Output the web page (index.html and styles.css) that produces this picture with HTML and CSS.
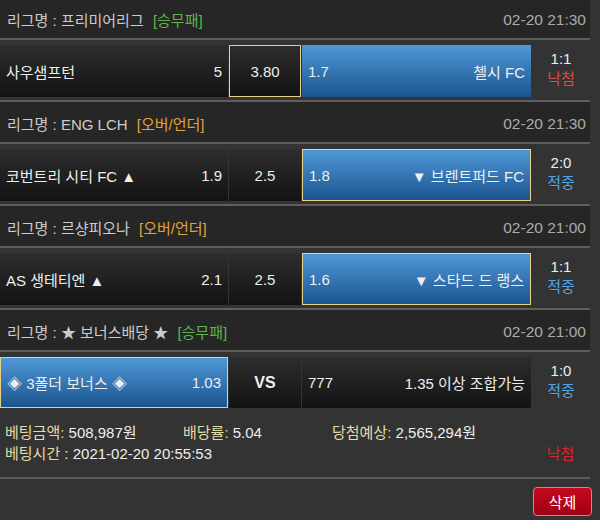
FILE: index.html
```html
<!DOCTYPE html>
<html lang="ko">
<head>
    <meta charset="UTF-8">
    <meta name="viewport" content="width=device-width, initial-scale=1.0">
    <title>베팅내역</title>
    <link rel="stylesheet" href="styles.css">
</head>
<body>
    <div class="betSlip">
        <div class="league">
            <span>리그명 : 프리미어리그 <em class="win">[승무패]</em></span>
            <span class="date">02-20 21:30</span>
        </div>
        <div class="game">
            <div class="cell"><span>사우샘프턴</span><span>5</span></div>
            <div class="cell draw selected">3.80</div>
            <div class="cell picked"><span>1.7</span><span>첼시 FC</span></div>
            <div class="result"><span>1:1</span><span class="miss">낙첨</span></div>
        </div>

        <div class="league">
            <span>리그명 : ENG LCH <em class="overUnder">[오버/언더]</em></span>
            <span class="date">02-20 21:30</span>
        </div>
        <div class="game">
            <div class="cell"><span>코번트리 시티 FC ▲</span><span>1.9</span></div>
            <div class="cell draw">2.5</div>
            <div class="cell picked selected"><span>1.8</span><span>▼ 브렌트퍼드 FC</span></div>
            <div class="result"><span>2:0</span><span class="hit">적중</span></div>
        </div>

        <div class="league">
            <span>리그명 : 르샹피오나 <em class="overUnder">[오버/언더]</em></span>
            <span class="date">02-20 21:00</span>
        </div>
        <div class="game">
            <div class="cell"><span>AS 생테티엔 ▲</span><span>2.1</span></div>
            <div class="cell draw">2.5</div>
            <div class="cell picked selected"><span>1.6</span><span>▼ 스타드 드 랭스</span></div>
            <div class="result"><span>1:1</span><span class="hit">적중</span></div>
        </div>

        <div class="league">
            <span>리그명 : ★ 보너스배당 ★ <em class="win">[승무패]</em></span>
            <span class="date">02-20 21:00</span>
        </div>
        <div class="game last">
            <div class="cell picked selected"><span>◈ 3폴더 보너스 ◈</span><span>1.03</span></div>
            <div class="cell draw vs">VS</div>
            <div class="cell"><span>777</span><span>1.35 이상 조합가능</span></div>
            <div class="result"><span>1:0</span><span class="hit">적중</span></div>
        </div>

        <div class="summary">
            <div><span class="label">베팅금액:</span> 508,987원</div>
            <div><span class="label">배당률:</span> 5.04</div>
            <div><span class="label">당첨예상:</span> 2,565,294원</div>
            <div></div>
            <div class="betTime"><span class="label">베팅시간</span> : 2021-02-20 20:55:53</div>
            <div class="finalResult">낙첨</div>
        </div>
    </div>

    <div class="actions">
        <button class="deleteButton">삭제</button>
    </div>
</body>
</html>
```

FILE: styles.css
```css
* {
    box-sizing: border-box;
}

body {
    margin: 0;
    background-color: #333;
    font-family: "Liberation Sans", "Noto Sans CJK KR", sans-serif;
    font-size: 15px;
    color: #eee;
}

.betSlip {
    width: 590px;
    margin-top: -2px;
}

.league {
    display: flex;
    justify-content: space-between;
    align-items: center;
    height: 42px;
    padding: 3px 4px 0 7px;
    background-color: #262626;
    border-bottom: 2px solid #5e5e5e;
    color: #ccc;
}

.league em {
    font-style: normal;
    margin-left: 5px;
}

.win {
    color: #5cb84a;
}

.overUnder {
    color: #e3a33c;
}

.date {
    color: #aaa;
    font-size: 15.5px;
}

.game {
    display: grid;
    grid-template-columns: 228px 72px 229px 1fr;
    column-gap: 1px;
    height: 62px;
    padding: 5px 0 3px;
    border-bottom: 2px solid #5e5e5e;
}

.game.last {
    border-bottom: none;
    height: 59px;
}

.cell {
    display: flex;
    justify-content: space-between;
    align-items: center;
    padding: 0 6px;
    background: linear-gradient(#2d2d2d, #131313);
    white-space: nowrap;
}

.draw {
    justify-content: center;
}

.vs {
    font-weight: bold;
    font-size: 16px;
}

.picked {
    background: linear-gradient(#5097d7, #1b558f);
}

.selected {
    border: 1px solid #e6d08a;
}

.result {
    display: flex;
    flex-direction: column;
    justify-content: center;
    align-items: center;
    line-height: 20px;
    padding-bottom: 4px;
}

.hit {
    color: #4ea3e6;
}

.miss {
    color: #e64646;
}

.summary {
    display: grid;
    grid-template-columns: 178px 149px 1fr 59px;
    grid-auto-rows: 21px;
    align-items: center;
    height: 68px;
    padding: 10px 0 0 5px;
    border-bottom: 2px solid #5e5e5e;
}

.label {
    color: #e3dca5;
}

.betTime {
    grid-column: 1 / 4;
}

.finalResult {
    text-align: center;
    color: #d8262a;
}

.actions {
    display: flex;
    justify-content: flex-end;
    padding: 8px 8px 0 0;
}

.deleteButton {
    width: 59px;
    height: 29px;
    padding: 0;
    font-family: inherit;
    font-size: 15px;
    color: #fff;
    background: linear-gradient(#c4091f, #a10016);
    border: 1px solid #d9808a;
    border-radius: 4px;
}
```
